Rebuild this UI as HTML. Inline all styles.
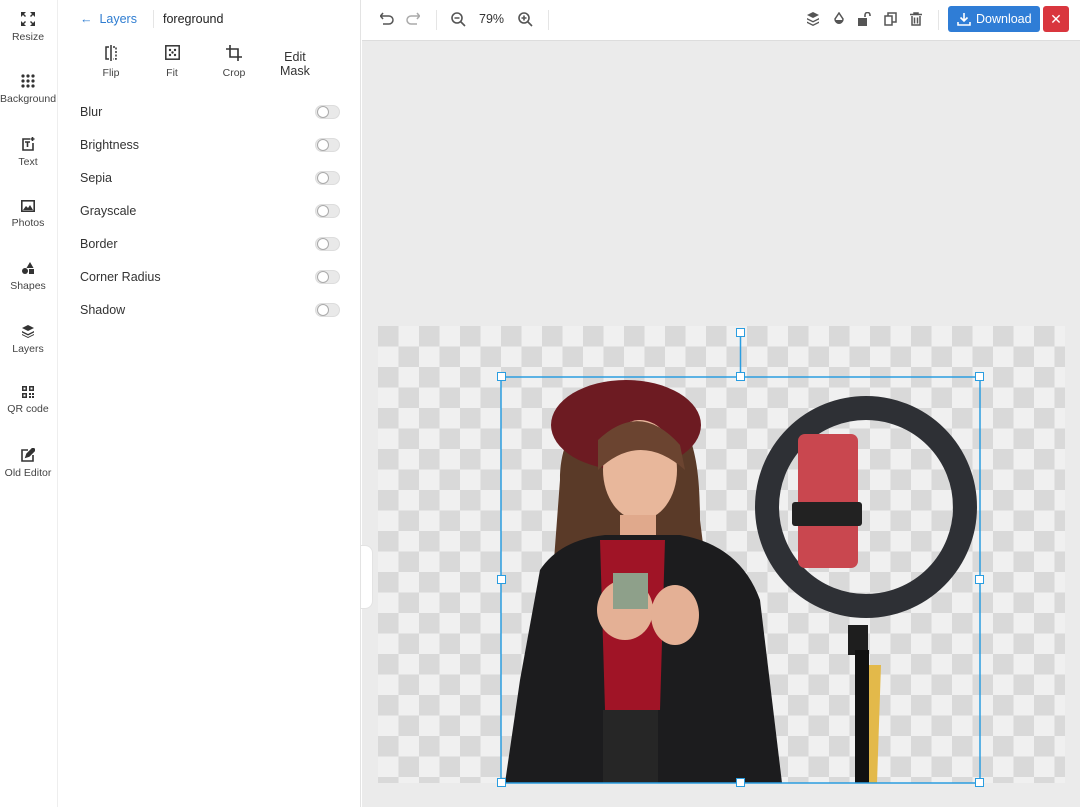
<!DOCTYPE html>
<html><head><style>
*{box-sizing:border-box;margin:0;padding:0}
body{width:1080px;height:807px;overflow:hidden;font-family:"Liberation Sans",sans-serif;background:#fff;position:relative;color:#333}
.sb{position:absolute;left:0;top:0;width:58px;height:807px;border-right:1px solid #eee;background:#fff}
.si{position:absolute;left:0;width:56px;text-align:center;font-size:10.5px;color:#444}
.si svg{display:block;margin:0 auto 5px}
.panel{position:absolute;left:58px;top:0;width:303px;height:807px;border-right:1px solid #e3e3e3}
.row{position:absolute;left:22px;width:260px;font-size:12.5px;color:#333}
.tg{position:absolute;right:0;top:0;width:25px;height:14px;border-radius:7px;background:#e9e9e9;border:1px solid #ddd}
.tg:after{content:"";position:absolute;left:1px;top:0;width:12px;height:12px;border-radius:50%;background:#fff;border:1px solid #aaa;box-sizing:border-box}
.tb{position:absolute;left:362px;top:0;width:718px;height:41px;border-bottom:1px solid #ddd;background:#fff}
.work{position:absolute;left:362px;top:41px;width:718px;height:766px;background:#ebebeb}
.chk{position:absolute;left:378px;top:326px;width:687px;height:457px;background-color:#f0f0f0;background-image:linear-gradient(45deg,#d9d9d9 25%,transparent 25%,transparent 75%,#d9d9d9 75%),linear-gradient(45deg,#d9d9d9 25%,transparent 25%,transparent 75%,#d9d9d9 75%);background-size:41px 41px;background-position:20.5px 0,0 20.5px}
.h{position:absolute;width:9px;height:9px;background:#fff;border:1.5px solid #2a9de0}
.ic{position:absolute;top:12px}
</style></head><body>
<div class="sb">
<div class="si" style="top:12px"><svg width="14" height="14" viewBox="0 0 14 14" fill="#333"><path d="M0 0h5l-2 2 2 2-1 1-2-2-2 2zM14 0v5l-2-2-2 2-1-1 2-2-2-2zM0 14v-5l2 2 2-2 1 1-2 2 2 2zM14 14h-5l2-2-2-2 1-1 2 2 2-2z"/></svg>Resize</div>
<div class="si" style="top:74px"><svg width="14" height="14" viewBox="0 0 14 14" fill="#333"><circle cx="2" cy="2" r="1.6"/><circle cx="7" cy="2" r="1.6"/><circle cx="12" cy="2" r="1.6"/><circle cx="2" cy="7" r="1.6"/><circle cx="7" cy="7" r="1.6"/><circle cx="12" cy="7" r="1.6"/><circle cx="2" cy="12" r="1.6"/><circle cx="7" cy="12" r="1.6"/><circle cx="12" cy="12" r="1.6"/></svg>Background</div>
<div class="si" style="top:137px"><svg width="14" height="14" viewBox="0 0 14 14" fill="none" stroke="#333" stroke-width="1.6"><path d="M9 2H2v11h10V6M4 5h5M6.5 5v5M11.5 0v4M9.5 2h4"/></svg>Text</div>
<div class="si" style="top:200px"><svg width="14" height="12" viewBox="0 0 14 12"><rect x="0.8" y="0.8" width="12.4" height="10.4" fill="none" stroke="#333" stroke-width="1.6"/><path d="M2 10l3-4 2 2 2-3 3 5z" fill="#333"/></svg>Photos</div>
<div class="si" style="top:261px"><svg width="14" height="14" viewBox="0 0 14 14" fill="#333"><path d="M9 1l3.5 6h-7z"/><circle cx="4" cy="10" r="3"/><rect x="8" y="8" width="5" height="5"/></svg>Shapes</div>
<div class="si" style="top:324px"><svg width="14" height="14" viewBox="0 0 14 14" fill="#333"><path d="M7 1l6 3-6 3-6-3z"/><path d="M1 7l6 3 6-3v1.5l-6 3-6-3z"/><path d="M1 10l6 3 6-3v1l-6 3-6-3z"/></svg>Layers</div>
<div class="si" style="top:386px"><svg width="12" height="12" viewBox="0 0 12 12" fill="#333"><path d="M0 0h5v5H0zM7 0h5v5H7zM0 7h5v5H0z"/><rect x="1.5" y="1.5" width="2" height="2" fill="#fff"/><rect x="8.5" y="1.5" width="2" height="2" fill="#fff"/><rect x="1.5" y="8.5" width="2" height="2" fill="#fff"/><path d="M7 7h2v2H7zM10 7h2v2h-2zM7 10h2v2H7zM10 10h2v2h-2z"/></svg>QR code</div>
<div class="si" style="top:448px"><svg width="14" height="14" viewBox="0 0 14 14" fill="none" stroke="#333" stroke-width="1.6"><path d="M7 2H1v11h11V7"/><path d="M5 9l1-3 6-6 2 2-6 6z" fill="#333"/></svg>Old Editor</div>
</div>
<div class="panel">
<div style="position:absolute;left:22px;top:12px;font-size:12.5px;color:#2f7dd1">&#8592;&nbsp; Layers</div>
<div style="position:absolute;left:95px;top:10px;width:1px;height:18px;background:#e5e5e5"></div>
<div style="position:absolute;left:105px;top:12px;font-size:12.5px;color:#222">foreground</div>
<div style="position:absolute;left:40px;top:45px;width:26px;text-align:center;font-size:10.5px;color:#444"><svg width="14" height="16" viewBox="0 0 14 16" fill="none" stroke="#333" stroke-width="1.5" style="display:block;margin:0 auto 6px"><path d="M5 2H2v12h3M7 0v16"/><path d="M9 2h3v12H9" stroke-dasharray="2 1.5"/></svg>Flip</div>
<div style="position:absolute;left:101px;top:45px;width:26px;text-align:center;font-size:10.5px;color:#444"><svg width="15" height="15" viewBox="0 0 15 15" style="display:block;margin:0 auto 7px"><rect x="0.8" y="0.8" width="13.4" height="13.4" fill="none" stroke="#333" stroke-width="1.5"/><g fill="#333"><circle cx="5" cy="5" r="1.2"/><circle cx="10" cy="5" r="1.2"/><circle cx="7.5" cy="7.5" r="1.2"/><circle cx="5" cy="10" r="1.2"/><circle cx="10" cy="10" r="1.2"/></g></svg>Fit</div>
<div style="position:absolute;left:160px;top:45px;width:32px;text-align:center;font-size:10.5px;color:#444"><svg width="16" height="16" viewBox="0 0 16 16" fill="none" stroke="#333" stroke-width="1.6" style="display:block;margin:0 auto 6px"><path d="M4 0v12h12M0 4h12v12"/></svg>Crop</div>
<div style="position:absolute;left:222px;top:50px;font-size:12.5px;color:#333;line-height:14px;text-align:center">Edit<br>Mask</div>
<div class="row" style="top:105px">Blur<span class="tg"></span></div>
<div class="row" style="top:138px">Brightness<span class="tg"></span></div>
<div class="row" style="top:171px">Sepia<span class="tg"></span></div>
<div class="row" style="top:204px">Grayscale<span class="tg"></span></div>
<div class="row" style="top:237px">Border<span class="tg"></span></div>
<div class="row" style="top:270px">Corner Radius<span class="tg"></span></div>
<div class="row" style="top:303px">Shadow<span class="tg"></span></div>
</div>
<div class="tb">
<svg class="ic" style="left:18px" width="14" height="14" viewBox="0 0 14 14" fill="none" stroke="#555" stroke-width="1.5"><path d="M1 4h8a4 4 0 010 8H3M3 1L0.5 4 3 7"/></svg>
<svg class="ic" style="left:44px" width="14" height="14" viewBox="0 0 14 14" fill="none" stroke="#aaa" stroke-width="1.5"><path d="M13 4H5a4 4 0 000 8h6M11 1l2.5 3L11 7"/></svg>
<div style="position:absolute;left:74px;top:10px;width:1px;height:20px;background:#e5e5e5"></div>
<svg class="ic" style="left:89px" width="15" height="15" viewBox="0 0 15 15" fill="none" stroke="#555" stroke-width="1.6"><circle cx="6" cy="6" r="5"/><path d="M10 10l4 4M3.5 6h5"/></svg>
<div style="position:absolute;left:117px;top:12px;font-size:12.5px;color:#333">79%</div>
<svg class="ic" style="left:156px" width="15" height="15" viewBox="0 0 15 15" fill="none" stroke="#555" stroke-width="1.6"><circle cx="6" cy="6" r="5"/><path d="M10 10l4 4M3.5 6h5M6 3.5v5"/></svg>
<div style="position:absolute;left:186px;top:10px;width:1px;height:20px;background:#e5e5e5"></div>
<svg class="ic" style="left:444px" width="14" height="14" viewBox="0 0 14 14" fill="#555"><path d="M7 0l6 3-6 3-6-3z"/><path d="M1 6l6 3 6-3v1.5l-6 3-6-3z"/><path d="M1 9.5l6 3 6-3V11l-6 3-6-3z"/></svg>
<svg class="ic" style="left:471px" width="12" height="14" viewBox="0 0 12 14"><path d="M6 1L2 7a4 4 0 008 0z" fill="none" stroke="#555" stroke-width="1.5"/><path d="M2 8h8a4 4 0 01-8 0z" fill="#555"/></svg>
<svg class="ic" style="left:496px" width="13" height="14" viewBox="0 0 13 14" fill="#555"><path d="M7 5V3a2.5 2.5 0 015 0v1" fill="none" stroke="#555" stroke-width="1.6"/><rect x="0" y="6" width="9" height="8"/></svg>
<svg class="ic" style="left:522px" width="13" height="14" viewBox="0 0 13 14" fill="none" stroke="#555" stroke-width="1.5"><rect x="1" y="4" width="7" height="9"/><path d="M4 4V1h8v9H8"/></svg>
<svg class="ic" style="left:548px" width="12" height="14" viewBox="0 0 12 14" fill="none" stroke="#555" stroke-width="1.5"><path d="M0 2.5h12M4 2.5V1h4v1.5M2 4v9h8V4M4.5 5.5v6M7.5 5.5v6"/></svg>
<div style="position:absolute;left:576px;top:10px;width:1px;height:20px;background:#e5e5e5"></div>
<div style="position:absolute;left:586px;top:6px;width:92px;height:26px;background:#2f7dd6;border-radius:3px;color:#fff;font-size:12.5px;line-height:26px;padding-left:28px">Download<svg style="position:absolute;left:9px;top:6px" width="14" height="14" viewBox="0 0 14 14" fill="none" stroke="#fff" stroke-width="1.6"><path d="M7 1v8M3.5 5.5L7 9l3.5-3.5M1 10v3h12v-3"/></svg></div>
<div style="position:absolute;left:681px;top:6px;width:26px;height:26px;background:#d9363e;border-radius:3px;color:#fff;font-size:14px;line-height:26px;text-align:center">&#10005;</div>
</div>
<div class="work"></div>
<div style="position:absolute;left:361px;top:545px;width:12px;height:64px;background:#fff;border-radius:0 8px 8px 0;border:1px solid #e3e3e3;border-left:none"></div>
<div class="chk"></div>
<svg style="position:absolute;left:0;top:0" width="1080" height="807">
<circle cx="866" cy="507" r="99" fill="none" stroke="#2e3035" stroke-width="24"/>
<rect x="798" y="434" width="60" height="134" rx="7" fill="#c9474f"/>
<rect x="792" y="502" width="70" height="24" rx="3" fill="#222"/>
<rect x="848" y="625" width="20" height="30" fill="#1e1e1e"/>
<rect x="855" y="650" width="14" height="133" fill="#111"/>
<path d="M869 665h12l-4 118h-8z" fill="#e3b94a"/>
<path d="M560 480 C560 420 600 395 640 400 C690 405 700 450 700 520 L720 680 L545 680 Z" fill="#5a3a28"/>
<ellipse cx="626" cy="425" rx="75" ry="45" fill="#6d1b22"/>
<ellipse cx="640" cy="470" rx="37" ry="50" fill="#e8b79b"/>
<path d="M598 440 Q640 400 680 445 L685 470 Q640 430 598 470 Z" fill="#6b4430"/>
<rect x="620" y="515" width="36" height="30" fill="#e0a98c"/>
<path d="M540 570 Q560 540 605 535 L680 535 Q740 545 760 600 L782 783 L505 783 L520 680 Z" fill="#1c1c1e"/>
<path d="M600 540 L665 540 L660 710 L605 710 Z" fill="#a01426"/>
<rect x="603" y="710" width="55" height="73" fill="#262626"/>
<ellipse cx="625" cy="610" rx="28" ry="30" fill="#e4b095"/>
<ellipse cx="675" cy="615" rx="24" ry="30" fill="#e4b095"/>
<rect x="613" y="573" width="35" height="36" fill="#8ea08a"/>
<rect x="501" y="377" width="479" height="406" fill="none" stroke="#2a9de0" stroke-width="1.5"/>
<line x1="740.5" y1="333" x2="740.5" y2="377" stroke="#2a9de0" stroke-width="1.5"/>
</svg>
<div class="h" style="left:736px;top:328px"></div>
<div class="h" style="left:497px;top:372px"></div><div class="h" style="left:736px;top:372px"></div><div class="h" style="left:975px;top:372px"></div>
<div class="h" style="left:497px;top:575px"></div><div class="h" style="left:975px;top:575px"></div>
<div class="h" style="left:497px;top:778px"></div><div class="h" style="left:736px;top:778px"></div><div class="h" style="left:975px;top:778px"></div>
</body></html>
